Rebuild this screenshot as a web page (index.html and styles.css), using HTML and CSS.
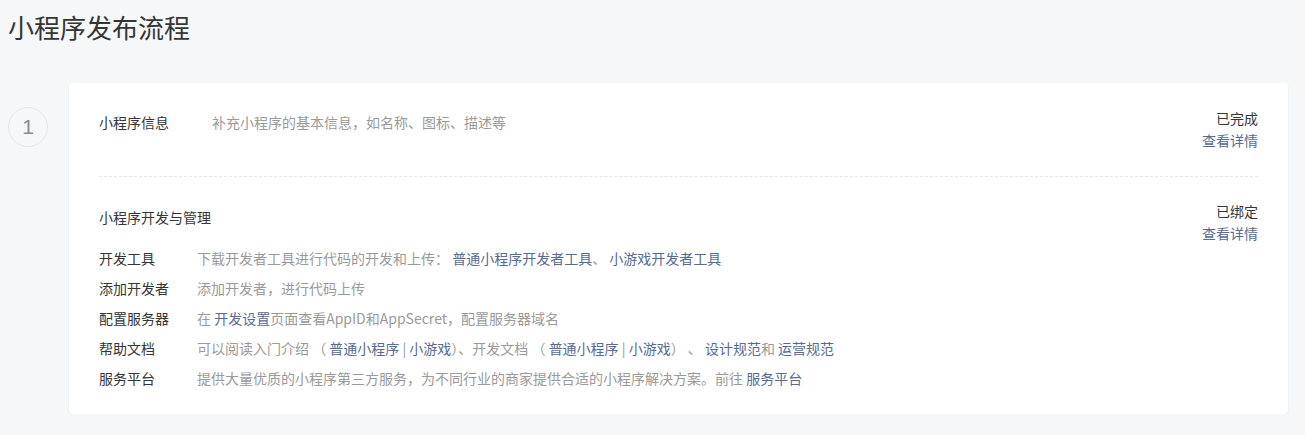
FILE: index.html
```html
<!DOCTYPE html>
<html lang="zh-CN">
<head>
<meta charset="utf-8">
<title>小程序发布流程</title>
<link rel="stylesheet" href="styles.css">
</head>
<body>
<h1 class="page-title">小程序发布流程</h1>
<div class="step">
  <div class="step-num">1</div>
  <div class="card">
    <div class="section section-info">
      <div class="info-main">
        <span class="info-label">小程序信息</span>
        <span class="desc">补充小程序的基本信息，如名称、图标、描述等</span>
      </div>
      <div class="status">
        <div class="status-text">已完成</div>
        <a class="link">查看详情</a>
      </div>
    </div>
    <div class="section section-dev">
      <div class="dev-head">
        <div class="dev-title">小程序开发与管理</div>
        <div class="status">
          <div class="status-text">已绑定</div>
          <a class="link">查看详情</a>
        </div>
      </div>
      <ul class="dev-list">
        <li class="row"><span class="row-label">开发工具</span><span class="desc">下载开发者工具进行代码的开发和上传： <a class="link">普通小程序开发者工具</a>、 <a class="link">小游戏开发者工具</a></span></li>
        <li class="row"><span class="row-label">添加开发者</span><span class="desc">添加开发者，进行代码上传</span></li>
        <li class="row"><span class="row-label">配置服务器</span><span class="desc">在 <a class="link">开发设置</a>页面查看AppID和AppSecret，配置服务器域名</span></li>
        <li class="row"><span class="row-label">帮助文档</span><span class="desc">可以阅读入门介绍 （ <a class="link">普通小程序</a> <span class="sep">|</span> <a class="link">小游戏</a>）、开发文档 （ <a class="link">普通小程序</a> <span class="sep">|</span> <a class="link">小游戏</a>） 、 <a class="link">设计规范</a>和 <a class="link">运营规范</a></span></li>
        <li class="row"><span class="row-label">服务平台</span><span class="desc">提供大量优质的小程序第三方服务，为不同行业的商家提供合适的小程序解决方案。前往 <a class="link">服务平台</a></span></li>
      </ul>
    </div>
  </div>
</div>
</body>
</html>
```
FILE: styles.css
```css
html, body {
  margin: 0;
  background: #f6f7f9;
}
body {
  padding: 9px 17px 0 8px;
  font-family: "Noto Sans CJK SC", "Noto Sans", sans-serif;
  font-size: 14px;
  color: #353535;
}
.page-title {
  margin: 0;
  font-size: 26px;
  line-height: 36px;
  font-weight: normal;
  color: #353535;
}
.step {
  display: flex;
  align-items: flex-start;
  gap: 21px;
  margin-top: 38px;
}
.step-num {
  width: 38px;
  height: 38px;
  flex: none;
  margin-top: 24px;
  border: 1px solid #e3e5e9;
  border-radius: 50%;
  text-align: center;
  line-height: 38px;
  font-family: "Liberation Sans", "Noto Sans", sans-serif;
  font-size: 21px;
  color: #8d8d8d;
}
.card {
  flex: 1;
  background: #fff;
  border-radius: 4px;
  box-shadow: 0 1px 2px rgba(0, 0, 0, 0.08);
  padding: 0 30px 21px;
}
.section-info {
  display: flex;
  justify-content: space-between;
  align-items: flex-start;
  padding: 24px 0 25px;
  border-bottom: 1px dashed #e4e6ea;
}
.info-main {
  display: flex;
  padding-top: 4px;
  line-height: 22px;
}
.info-label {
  width: 113px;
  flex: none;
}
.desc {
  color: #9a9a9a;
}
.status {
  text-align: right;
  line-height: 22px;
}
.status-text {
  color: #353535;
}
.link {
  color: #576b95;
  text-decoration: none;
  cursor: pointer;
}
.sep {
  color: #8c97b2;
}
.section-dev {
  padding-top: 23px;
}
.dev-head {
  display: flex;
  justify-content: space-between;
  align-items: flex-start;
}
.dev-title {
  padding-top: 6px;
  line-height: 22px;
}
.dev-list {
  list-style: none;
  margin: -1px 0 0;
  padding: 0;
}
.row {
  display: flex;
  line-height: 30px;
}
.row-label {
  width: 98px;
  flex: none;
}
```
